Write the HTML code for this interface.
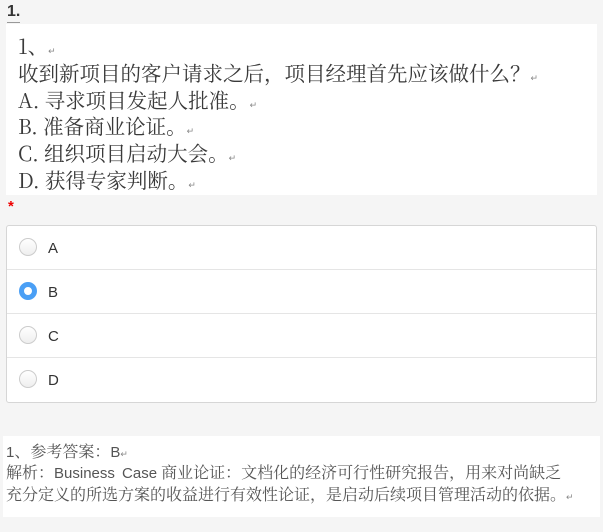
<!DOCTYPE html>
<html><head><meta charset="utf-8"><style>
body{margin:0;width:603px;height:532px;background:#f5f5f5;position:relative;overflow:hidden;font-family:"Liberation Sans","Noto Sans CJK SC",sans-serif}
.num{position:absolute;left:7px;top:2px;font-weight:bold;font-size:16px;color:#333;border-bottom:1px solid #999;line-height:20px}
.q{position:absolute;left:6px;top:24px;width:591px;height:171px;background:#fff}
.q div{position:absolute;left:12px;font-family:"Noto Serif CJK SC",serif;font-size:20.5px;color:#3a3a3a;white-space:nowrap;line-height:26px}
.m{font-size:9px;color:#888}
.star{position:absolute;left:8px;top:198px;color:#e00;font-size:15px;font-weight:bold}
.opts{position:absolute;left:6px;top:225px;width:589px;height:176px;background:#fff;border:1px solid #d6d6d6;border-radius:3px}
.row{height:43px;border-bottom:1px solid #e5e5e5;position:relative;font-size:15px;color:#333}
.row:last-child{border-bottom:none}
.r{position:absolute;left:12px;top:12px;width:18px;height:18px;border-radius:50%;border:1px solid #ccc;box-sizing:border-box;background:linear-gradient(#fff,#eee)}
.r.on{border:5px solid #4a9ff5;background:#fff}
.row span{position:absolute;left:41px;top:14px}
.ans{position:absolute;left:3px;top:436px;width:597px;height:81px;background:#fff}
.ans div{position:absolute;left:3px;font-size:16px;color:#555;white-space:nowrap;font-family:"Noto Serif CJK SC",serif;line-height:20px}
.ans .s{font-family:"Liberation Sans",sans-serif;font-size:15px}
</style></head><body>
<div class="num">1.</div>
<div class="q">
<div style="top:8px">1、<span class="m">↵</span></div>
<div style="top:35px">收到新项目的客户请求之后，项目经理首先应该做什么？<span class="m">↵</span></div>
<div style="top:62px">A.&nbsp;寻求项目发起人批准。<span class="m">↵</span></div>
<div style="top:88px">B.&nbsp;准备商业论证。<span class="m">↵</span></div>
<div style="top:115px">C.&nbsp;组织项目启动大会。<span class="m">↵</span></div>
<div style="top:142px">D.&nbsp;获得专家判断。<span class="m">↵</span></div>
</div>
<div class="star">*</div>
<div class="opts">
<div class="row"><div class="r"></div><span>A</span></div>
<div class="row"><div class="r on"></div><span>B</span></div>
<div class="row"><div class="r"></div><span>C</span></div>
<div class="row"><div class="r"></div><span>D</span></div>
</div>
<div class="ans">
<div style="top:5px"><span class="s">1</span>、参考答案：<span class="s">B</span><span class="m">↵</span></div>
<div style="top:26px">解析：<span class="s" style="word-spacing:3px">Business Case</span> 商业论证：文档化的经济可行性研究报告，用来对尚缺乏</div>
<div style="top:48px">充分定义的所选方案的收益进行有效性论证，是启动后续项目管理活动的依据。<span class="m">↵</span></div>
</div>
</body></html>
